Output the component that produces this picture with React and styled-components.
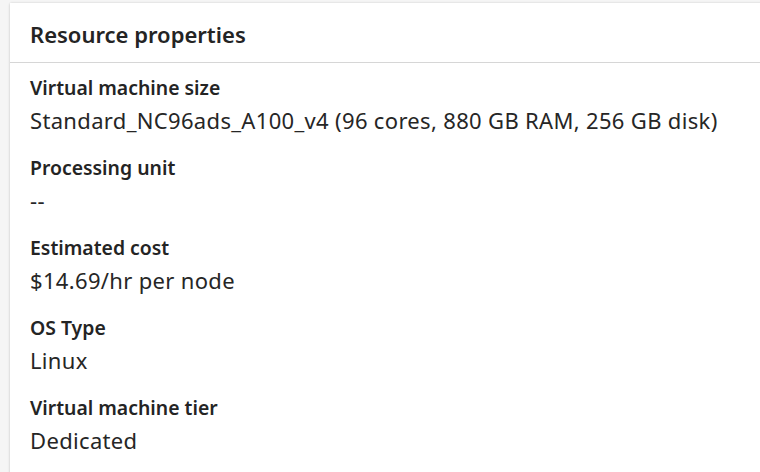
import React from "react";
import styled, { createGlobalStyle } from "styled-components";

const GlobalStyle = createGlobalStyle`
  html, body {
    margin: 0;
    padding: 0;
    background: #f5f5f5;
    overflow: hidden;
  }
  body {
    font-family: "Noto Sans", "Open Sans", sans-serif;
    color: #242424;
  }
`;

const Card = styled.section`
  margin: 3px -20px 0 10px;
  min-height: 480px;
  background: #ffffff;
  box-shadow: 0 0 2px rgba(0, 0, 0, 0.12), 0 1px 3px rgba(0, 0, 0, 0.1);
`;

const Header = styled.h2`
  margin: 0;
  padding: 16px 20px 13px;
  font-size: 22px;
  line-height: 30px;
  font-weight: 600;
  border-bottom: 1px solid #d6d6d6;
`;

const List = styled.dl`
  margin: 0;
  padding: 10px 20px 0;
  display: flex;
  flex-direction: column;
  gap: 16px;
`;

const Item = styled.div`
  display: flex;
  flex-direction: column;
`;

const Label = styled.dt`
  font-size: 19.4px;
  line-height: 30px;
  font-weight: 600;
`;

const Value = styled.dd`
  margin: 0;
  font-size: 22px;
  letter-spacing: 0.33px;
  line-height: 34px;
  font-weight: 400;
  color: #262626;
`;

const properties = [
  { label: "Virtual machine size", value: "Standard_NC96ads_A100_v4 (96 cores, 880 GB RAM, 256 GB disk)" },
  { label: "Processing unit", value: "--" },
  { label: "Estimated cost", value: "$14.69/hr per node" },
  { label: "OS Type", value: "Linux" },
  { label: "Virtual machine tier", value: "Dedicated" },
];

export default function App() {
  return (
    <>
      <GlobalStyle />
      <Card>
        <Header>Resource properties</Header>
        <List>
          {properties.map((p) => (
            <Item key={p.label}>
              <Label>{p.label}</Label>
              <Value>{p.value}</Value>
            </Item>
          ))}
        </List>
      </Card>
    </>
  );
}
